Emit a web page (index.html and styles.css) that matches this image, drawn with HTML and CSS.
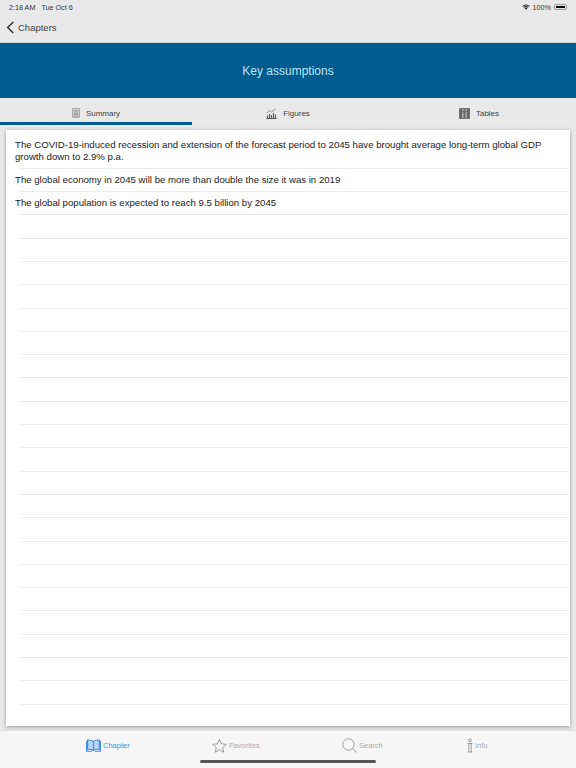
FILE: index.html
```html
<!DOCTYPE html>
<html>

	<head>
		<meta charset="UTF-8">
		<title>Key assumptions</title>
		<link rel="stylesheet" href="styles.css">
	</head>

	<body>
		<div class="page">
			<div class="status">
				<span>2:18 AM</span>
				<span class="status-date">Tue Oct 6</span>
				<span class="status-right">
					<svg class="wifi" viewBox="0 0 12 9"><path d="M6 8.6 3.9 6.4a3 3 0 0 1 4.2 0zM3.2 5.7 2.2 4.7a5.4 5.4 0 0 1 7.6 0l-1 1a4 4 0 0 0-5.6 0zM1.5 4 .4 2.9a8 8 0 0 1 11.2 0L10.5 4a6.4 6.4 0 0 0-9 0z"/></svg>
					<span>100%</span>
					<span class="battery"><i></i></span>
				</span>
			</div>
			<div class="nav">
				<svg class="back" viewBox="0 0 9 14"><path d="M7.5 1 1.5 7l6 6"/></svg>
				<span>Chapters</span>
			</div>
			<div class="hero">Key assumptions</div>
			<div class="tabs">
				<div class="tab active">
					<svg class="tab-icon" viewBox="0 0 10 12"><path class="doc" d="M.8.6h8.4v10.8H.8z"/><path d="M2.2 3h5.6M2.2 4.7h5.6M2.2 6.4h5.6M2.2 8.1h5.6M2.2 9.8h5.6"/></svg>
					<span>Summary</span>
				</div>
				<div class="tab">
					<svg class="tab-icon wide" viewBox="0 0 11 11"><path class="bars" d="M.5 10.5h10M1.5 10V7.5M3.5 10V6M5.5 10V7M7.5 10V5M9.5 10V6.5"/><path d="M1 5l2.5-2.5 2 1.5L9.500 1"/></svg>
					<span>Figures</span>
				</div>
				<div class="tab tables">
					<svg class="tab-icon wide" viewBox="0 0 10 10"><path class="fill" d="M.5.5h9v9h-9z"/><path class="cut" d="M3.5 1v2M3.5 4v5M6.5 1v2M6.5 4v5"/></svg>
					<span>Tables</span>
				</div>
			</div>
			<div class="card">
				<div class="row first">The COVID-19-induced recession and extension of the forecast period to 2045 have brought average long-term global GDP growth down to 2.9% p.a.</div>
				<div class="row">The global economy in 2045 will be more than double the size it was in 2019</div>
				<div class="row">The global population is expected to reach 9.5 billion by 2045</div>
				<div class="row"></div>
				<div class="row"></div>
				<div class="row"></div>
				<div class="row"></div>
				<div class="row"></div>
				<div class="row"></div>
				<div class="row"></div>
				<div class="row"></div>
				<div class="row"></div>
				<div class="row"></div>
				<div class="row"></div>
				<div class="row"></div>
				<div class="row"></div>
				<div class="row"></div>
				<div class="row"></div>
				<div class="row"></div>
				<div class="row"></div>
				<div class="row"></div>
				<div class="row"></div>
				<div class="row"></div>
				<div class="row"></div>
			</div>
			<div class="footer">
				<div class="foot-item on">
					<svg class="foot-icon" viewBox="0 0 15 13"><path class="book" d="M7.5 2.6C6.2 1.3 4 .9 1.6 1.1v9.2c2.4-.2 4.6.2 5.9 1.3 1.3-1.1 3.5-1.5 5.9-1.3V1.1C11 .9 8.8 1.3 7.5 2.6z"/><path d="M7.5 2.6v9M1.6 2.5H.6v9.8h5.4M13.4 2.5h1v9.8H9"/></svg>
					<span>Chapter</span>
				</div>
				<div class="foot-item">
					<svg class="foot-icon" viewBox="0 0 15 14"><path d="M7.5.9l2 4.4 4.8.5-3.6 3.2 1 4.7-4.2-2.4-4.2 2.4 1-4.7L.7 5.8l4.8-.5z"/></svg>
					<span>Favorites</span>
				</div>
				<div class="foot-item">
					<svg class="foot-icon" viewBox="0 0 15 15"><circle cx="6.5" cy="6.5" r="5.7"/><path d="M10.7 10.7 14.5 14.5"/></svg>
					<span>Search</span>
				</div>
				<div class="foot-item">
					<svg class="foot-icon slim" viewBox="0 0 6 14"><circle cx="3" cy="1.8" r="1.4"/><path d="M.6 5h4.8M.6 13.5h4.8M1.8 5v8.5M4.2 5v8.5"/></svg>
					<span>Info</span>
				</div>
			</div>
			<div class="home-bar"></div>
		</div>
	</body>

</html>
```

FILE: styles.css
```css
* {
	margin: 0;
	padding: 0;
	box-sizing: border-box;
}

html,
body {
	height: 100%;
}

body {
	font-family: "Liberation Sans", Arial, sans-serif;
	color: #222;
	overflow: hidden;
}

.page {
	position: relative;
	width: 576px;
	height: 768px;
	display: flex;
	flex-direction: column;
	background-color: #e9e9e9;
}

.status {
	height: 14px;
	display: flex;
	align-items: center;
	padding: 0 9px;
	font-size: 7.2px;
	color: #333;
}

.status-date {
	margin-left: 6px;
}

.status-right {
	margin-left: auto;
	display: flex;
	align-items: center;
	gap: 3px;
}

.wifi {
	width: 8px;
	height: 6px;
	fill: #222;
}

.battery {
	width: 13px;
	height: 6px;
	padding: 1px;
	border: 1px solid #999;
	border-radius: 2px;
	display: block;
}

.battery i {
	display: block;
	height: 100%;
	background-color: #000;
}

.nav {
	height: 28px;
	display: flex;
	align-items: center;
	padding: 0 0 1px 6px;
	gap: 3px;
	font-size: 9.5px;
	color: #444;
}

.back {
	width: 9px;
	height: 13px;
	fill: none;
	stroke: #333;
	stroke-width: 1.6;
}

.hero {
	height: 56px;
	display: flex;
	align-items: center;
	justify-content: center;
	background-color: #005b8f;
	color: #bfe3f5;
	font-size: 12px;
	border-top: 1px solid #cfdbe3;
}

.tabs {
	height: 27px;
	display: grid;
	grid-template-columns: repeat(3, 1fr);
}

.tab {
	display: flex;
	align-items: center;
	justify-content: center;
	gap: 6px;
	padding-top: 6px;
	font-size: 8px;
	color: #444;
	border-bottom: 3px solid transparent;
}

.tab.active {
	border-bottom-color: #005b8f;
}

.tab.tables {
	padding-right: 2px;
}

.tab-icon {
	width: 8px;
	height: 10px;
	fill: none;
	stroke: #777;
	stroke-width: 0.8;
}

.tab-icon.wide {
	width: 11px;
	height: 11px;
}

.tab-icon .doc {
	fill: #ddd;
}

.tab-icon .bars {
	stroke: #555;
	stroke-width: 1.1;
}

.tab-icon .fill {
	fill: #666;
	stroke: #666;
}

.tab-icon .cut {
	stroke: #e9e9e9;
}

.card {
	flex: 1;
	margin: 5px 6px 4px;
	padding-top: 5px;
	background-color: #fff;
	box-shadow: 0 1px 4px rgba(0, 0, 0, 0.35);
	display: flex;
	flex-direction: column;
}

.row {
	position: relative;
	height: 23.3px;
	padding: 0 18px 1px 9px;
	display: flex;
	align-items: center;
	font-size: 9.65px;
	line-height: 12px;
	color: #222;
}

.row::after {
	content: "";
	position: absolute;
	left: 14px;
	right: 2px;
	bottom: 0;
	height: 1px;
	background-color: #ececec;
}

.row.first {
	height: 33.8px;
	padding-bottom: 2px;
}

.footer {
	height: 38px;
	display: grid;
	grid-template-columns: 126px 130px 125px 60px;
	align-items: center;
	padding: 0 0 8px 86px;
	background-color: #f6f6f6;
	border-top: 1px solid #e2e2e2;
}

.foot-item {
	display: flex;
	align-items: center;
	gap: 2px;
	font-size: 7.5px;
	color: #aaa;
}

.foot-icon {
	width: 15px;
	height: 15px;
	fill: none;
	stroke: #888;
	stroke-width: 0.8;
}

.foot-icon.slim {
	width: 6px;
}

.foot-item.on {
	color: #4a90e2;
}

.foot-item.on .foot-icon {
	stroke: #3b8ae6;
	stroke-width: 1.1;
}

.foot-icon .book {
	fill: #b5d4f7;
}

.home-bar {
	position: absolute;
	left: 200px;
	bottom: 5px;
	width: 176px;
	height: 3px;
	border-radius: 2px;
	background-color: #555;
}
```
